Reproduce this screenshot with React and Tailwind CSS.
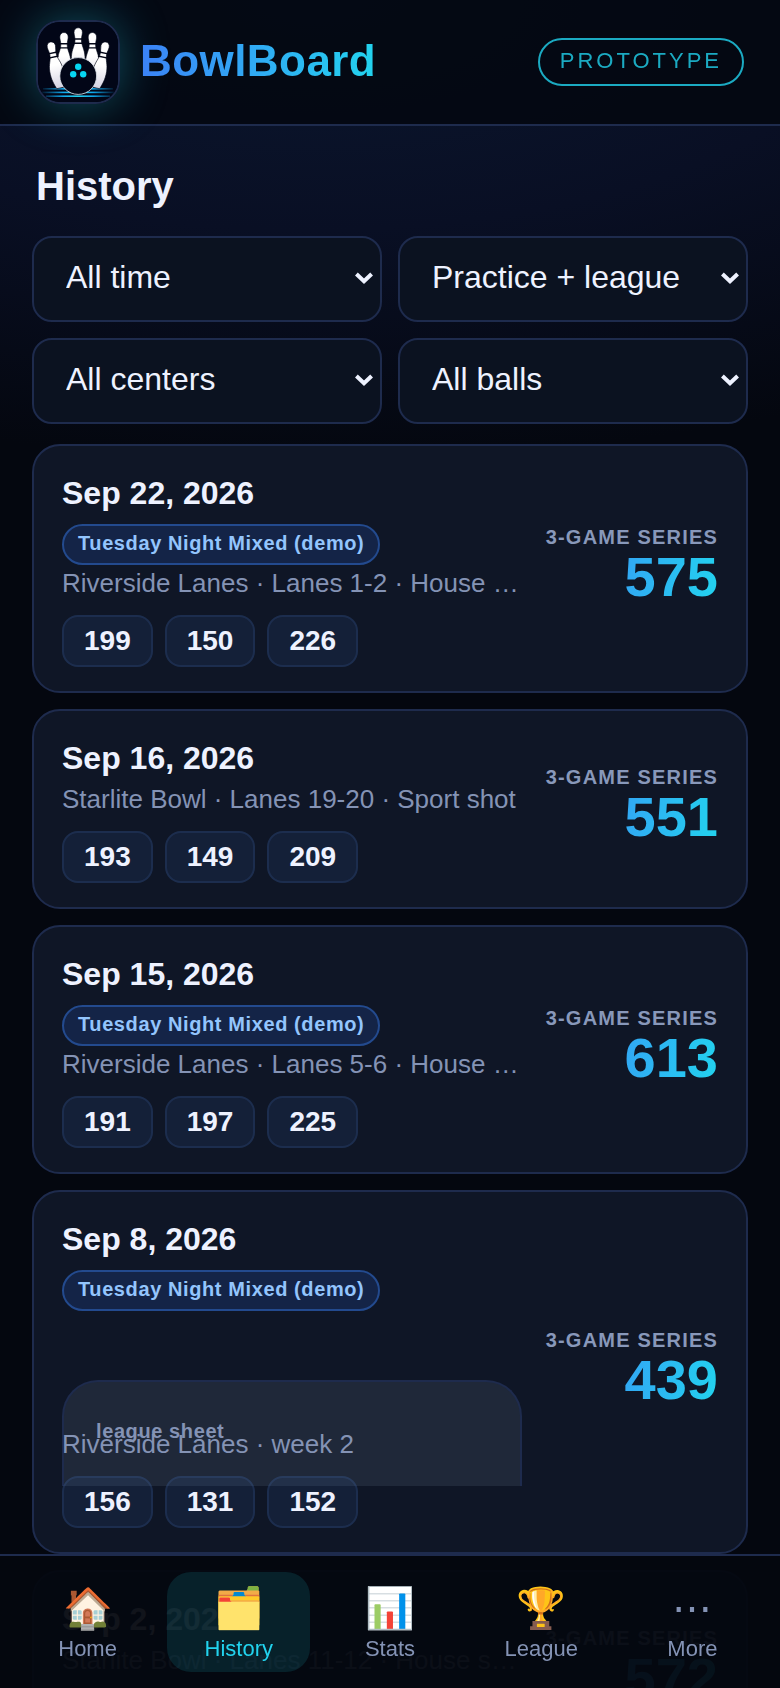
import { useState } from "react"

const filters = [
  { id: "range", label: "Date range", options: ["All time", "Last 30 days", "This season"] },
  { id: "kind", label: "Session type", options: ["Practice + league", "Practice only", "League only"] },
  { id: "center", label: "Bowling center", options: ["All centers", "Riverside Lanes", "Starlite Bowl"] },
  { id: "ball", label: "Ball", options: ["All balls"] },
]

const sessions = [
  {
    date: "Sep 22, 2026",
    league: "Tuesday Night Mixed (demo)",
    meta: "Riverside Lanes · Lanes 1-2 · House shot",
    games: [199, 150, 226],
    series: 575,
  },
  {
    date: "Sep 16, 2026",
    meta: "Starlite Bowl · Lanes 19-20 · Sport shot",
    games: [193, 149, 209],
    series: 551,
  },
  {
    date: "Sep 15, 2026",
    league: "Tuesday Night Mixed (demo)",
    meta: "Riverside Lanes · Lanes 5-6 · House shot",
    games: [191, 197, 225],
    series: 613,
  },
  {
    date: "Sep 8, 2026",
    league: "Tuesday Night Mixed (demo)",
    sheet: true,
    meta: "Riverside Lanes · week 2",
    games: [156, 131, 152],
    series: 439,
  },
  {
    date: "Sep 2, 2026",
    meta: "Starlite Bowl · Lanes 11-12 · House shot",
    games: [188, 201, 183],
    series: 572,
  },
]

const tabs = [
  { name: "Home", icon: "🏠" },
  { name: "History", icon: "🗂️" },
  { name: "Stats", icon: "📊" },
  { name: "League", icon: "🏆" },
  { name: "More", icon: "⋯" },
]

function Pin({ transform }) {
  return (
    <g transform={transform}>
      <path
        fill="url(#pin)"
        stroke="#020617"
        strokeWidth="0.6"
        d="M-4.2 4.5C-4.2 1.6-2.2 0 0 0S4.2 1.6 4.2 4.5C4.2 7 3.2 9 3.2 12C3.2 18 6.4 21 6.8 29C7.2 37 5 43 3.5 47H-3.5C-5 43-7.2 37-6.8 29C-6.4 21-3.2 18-3.2 12C-3.2 9-4.2 7-4.2 4.5Z"
      />
      <path stroke="#020617" strokeWidth="1.4" d="M-4.5 11.2H4.5M-5 15.4H5" />
    </g>
  )
}

function Logo() {
  return (
    <svg viewBox="0 0 80 80" className="block h-full w-full" aria-hidden="true">
      <defs>
        <linearGradient id="pin" x1="0" y1="0" x2="0" y2="1">
          <stop offset="0.5" stopColor="#ffffff" />
          <stop offset="1" stopColor="#d5d3e2" />
        </linearGradient>
        <linearGradient id="lane" gradientUnits="userSpaceOnUse" x1="2" y1="0" x2="78" y2="0">
          <stop offset="0" stopColor="#0ea5e9" stopOpacity="0" />
          <stop offset="0.3" stopColor="#0ea5e9" />
          <stop offset="0.5" stopColor="#22d3ee" />
          <stop offset="0.7" stopColor="#0ea5e9" />
          <stop offset="1" stopColor="#0ea5e9" stopOpacity="0" />
        </linearGradient>
      </defs>
      <rect width="80" height="80" fill="#020617" />
      <rect x="5" y="66" width="70" height="1.6" fill="url(#lane)" />
      <rect x="2" y="69.6" width="76" height="1.6" fill="url(#lane)" />
      <rect x="8" y="73.4" width="64" height="1.6" fill="url(#lane)" />
      <Pin transform="translate(26 10.5)" />
      <Pin transform="translate(54.4 10.5)" />
      <Pin transform="translate(40.2 5.8)" />
      <Pin transform="translate(12.4 20) rotate(-12)" />
      <Pin transform="translate(68 20) rotate(12)" />
      <circle cx="40.2" cy="54" r="18.4" fill="#020617" stroke="#e2e8f0" strokeWidth="0.8" />
      <circle cx="40.2" cy="44.7" r="3.2" fill="#06d6f2" />
      <circle cx="35.2" cy="52.2" r="3.2" fill="#06d6f2" />
      <circle cx="45.2" cy="52.2" r="3.2" fill="#06d6f2" />
    </svg>
  )
}

function Header() {
  return (
    <header className="sticky top-0 z-10 flex items-center justify-between border-b-2 border-[#1e2b4d] bg-[#04070f]/85 px-9 py-5">
      <div className="flex items-center gap-5">
        <div className="size-[84px] overflow-hidden rounded-[24px] border-2 border-[#1e2b4d] shadow-[0_0_48px_rgba(34,211,238,0.35)]">
          <Logo />
        </div>
        <span className="bg-linear-to-r from-[#3b82f6] to-[#22d3ee] bg-clip-text pb-[2px] text-[44px] leading-[64px] font-bold tracking-[0.01em] text-transparent">
          BowlBoard
        </span>
      </div>
      <span className="rounded-full border-2 border-[#22d3ee] px-5 pt-[7px] pb-[9px] text-[22px] leading-7 tracking-[3px] text-[#22d3ee] opacity-80">
        PROTOTYPE
      </span>
    </header>
  )
}

function Filter({ id, label, options }) {
  return (
    <div className="relative">
      <select
        id={id}
        aria-label={label}
        className="block w-full appearance-none rounded-[20px] border-2 border-[#1e2b4d] bg-[#0b1220] pt-5 pr-14 pb-6 pl-8 text-[32px] leading-[38px] text-[#eef2ff]"
      >
        {options.map((option) => (
          <option key={option}>{option}</option>
        ))}
      </select>
      <svg
        className="pointer-events-none absolute top-[34px] right-2 h-4 w-5"
        viewBox="0 0 20 16"
        fill="none"
        stroke="#eef2ff"
        strokeWidth="4"
      >
        <path d="M2.4 4L10 11.2L17.6 4" />
      </svg>
    </div>
  )
}

function SessionCard({ session }) {
  return (
    <article className="flex items-center gap-6 rounded-[28px] border-2 border-[#1e2b4d] bg-[#0f1626] px-7 py-6">
      <div className="min-w-0 flex-1">
        <h2 className="text-[32px] leading-[46px] font-bold">{session.date}</h2>
        {session.league && (
          <div className="mt-2 flex">
            <span className="rounded-full border-2 border-[#234a8e] bg-[#142447] px-[14px] pt-1 pb-[7px] text-[20px] leading-[26px] font-bold tracking-[0.03em] text-[#93c5fd]">
              {session.league}
            </span>
          </div>
        )}
        {/* the sheet runs down behind the meta line and the games */}
        {session.sheet && (
          <div className="relative h-[115px]">
            <div className="absolute inset-x-0 top-[69px] h-[106px] rounded-t-[36px] border-x-2 border-t-2 border-[#1e2b4d] bg-[#94b0c4]/12 px-8 pt-[38px] text-[20px] leading-[22px] font-bold tracking-[0.03em] text-[#8493b5]">
              league sheet
            </div>
          </div>
        )}
        <p className="relative truncate text-[26px] leading-9 text-[#8493b5]">{session.meta}</p>
        <div className="relative mt-[14px] flex gap-3">
          {session.games.map((game, i) => (
            <span
              key={i}
              className="rounded-[16px] border-2 border-[#5078d2]/15 bg-[#4682dc]/10 px-5 py-1 text-[28px] leading-10 font-bold"
            >
              {game}
            </span>
          ))}
        </div>
      </div>
      <div className="text-right">
        <div className="text-[20px] leading-4 font-bold tracking-[0.06em] text-[#8898ba]">3-GAME SERIES</div>
        <div className="bg-linear-100 from-[#3b82f6] to-[#22d3ee] bg-clip-text text-[56px] leading-[64px] font-bold text-transparent">
          {session.series}
        </div>
      </div>
    </article>
  )
}

function TabBar() {
  const [active, setActive] = useState("History")

  return (
    <nav className="fixed inset-x-0 bottom-0 z-10 grid grid-cols-5 gap-2 border-t-2 border-[#1e2b4d] bg-[#04070f]/95 p-4">
      {tabs.map((tab) => (
        <button
          key={tab.name}
          onClick={() => setActive(tab.name)}
          className={`flex h-[100px] flex-col items-center rounded-[24px] pt-3 ${
            active === tab.name ? "bg-[#22d3ee]/12 text-[#22d3ee]" : "text-[#8493b5]"
          }`}
        >
          <span className="text-[40px] leading-[48px]">{tab.icon}</span>
          <span className="text-[22px] leading-[34px]">{tab.name}</span>
        </button>
      ))}
    </nav>
  )
}

export default function App() {
  return (
    <div className="h-screen overflow-y-auto bg-[#04070f] bg-[radial-gradient(1100px_460px_at_40%_0,#0b172f,#090f24_50%,#04070f)] font-['Liberation_Sans',Arial,sans-serif] text-[#eef2ff] [scrollbar-width:none]">
      <Header />
      <main className="px-8 pt-8 pb-40">
        <h1 className="mb-[22px] pl-1 text-[40px] leading-[56px] font-bold">History</h1>
        <div className="grid grid-cols-2 gap-4">
          {filters.map((filter) => (
            <Filter key={filter.id} {...filter} />
          ))}
        </div>
        <div className="mt-5 flex flex-col gap-4">
          {sessions.map((session) => (
            <SessionCard key={session.date} session={session} />
          ))}
        </div>
      </main>
      <TabBar />
    </div>
  )
}
